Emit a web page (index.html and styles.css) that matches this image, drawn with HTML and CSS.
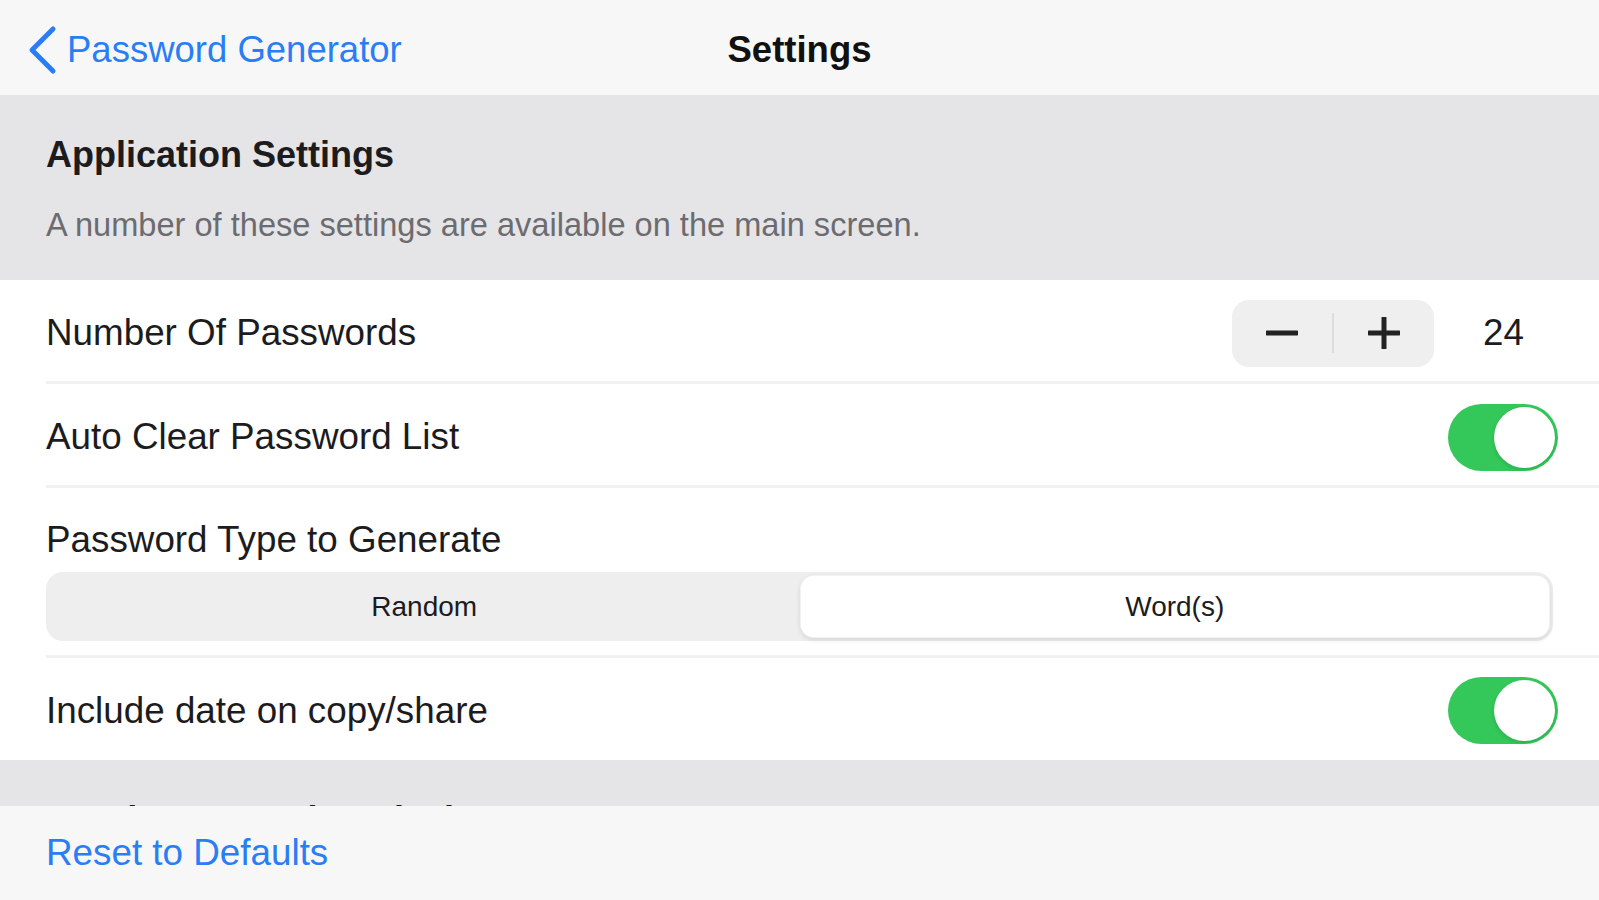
FILE: index.html
```html
<!DOCTYPE html>
<html lang="en">

<head>
    <meta charset="UTF-8">
    <meta name="viewport" content="width=device-width, initial-scale=1.0">
    <title>Settings</title>
    <link rel="stylesheet" href="styles.css">
</head>

<body>
    <div class="navbar">
        <a href="#" class="back">
            <svg class="chevron" width="30" height="50" viewBox="0 0 30 50">
                <path d="M25 4 L4 25 L25 46" fill="none" stroke="currentColor" stroke-width="5"
                    stroke-linecap="round" stroke-linejoin="round" />
            </svg>
            <span>Password Generator</span>
        </a>
        <h1 class="title">Settings</h1>
        <div></div>
    </div>

    <div class="content">
        <div class="group-header">
            <h2>Application Settings</h2>
            <p>A number of these settings are available on the main screen.</p>
        </div>

        <div class="group">
            <div class="row">
                <span class="label">Number Of Passwords</span>
                <div class="right">
                    <div class="stepper">
                        <button class="step">
                            <svg width="32" height="32" viewBox="0 0 32 32">
                                <path d="M1 16 H31" stroke="#222" stroke-width="5" stroke-linecap="round" />
                            </svg>
                        </button>
                        <span class="step-divider"></span>
                        <button class="step">
                            <svg width="32" height="32" viewBox="0 0 32 32">
                                <path d="M1 16 H31 M16 1 V31" stroke="#222" stroke-width="5"
                                    stroke-linecap="round" />
                            </svg>
                        </button>
                    </div>
                    <span class="value">24</span>
                </div>
            </div>

            <div class="row">
                <span class="label">Auto Clear Password List</span>
                <div class="toggle"><span class="knob"></span></div>
            </div>

            <div class="row row-stack">
                <span class="label">Password Type to Generate</span>
                <div class="segmented">
                    <div class="segment">Random</div>
                    <div class="segment selected">Word(s)</div>
                </div>
            </div>

            <div class="row last">
                <span class="label">Include date on copy/share</span>
                <div class="toggle"><span class="knob"></span></div>
            </div>
        </div>

        <div class="group-header">
            <h2>Word Password Analysis</h2>
        </div>
    </div>

    <div class="toolbar">
        <a href="#">Reset to Defaults</a>
    </div>
</body>

</html>
```

FILE: styles.css
```css
* {
    margin: 0;
    padding: 0;
    box-sizing: border-box;
}

html,
body {
    height: 100%;
    width: 100%;
}

body {
    font-family: "Liberation Sans", Arial, sans-serif;
    color: #1c1c1e;
    background: #e5e5e7;
    overflow: hidden;
    display: flex;
    flex-direction: column;
}

a {
    color: #2a7ef5;
    text-decoration: none;
}

.navbar {
    flex: none;
    height: 95px;
    padding-top: 5px;
    background: #f7f7f7;
    display: grid;
    grid-template-columns: 1fr auto 1fr;
    align-items: center;
}

.back {
    display: flex;
    align-items: center;
    gap: 9px;
    padding-left: 28px;
    font-size: 36.5px;
}

.chevron {
    display: block;
}

.title {
    font-size: 36.5px;
    font-weight: bold;
    color: #111;
}

.content {
    flex: 1;
    min-height: 0;
    overflow: hidden;
}

.group-header {
    height: 185px;
    padding: 38px 0 0 46px;
    background: #e5e5e7;
}

.group-header h2 {
    font-size: 36px;
    font-weight: bold;
    line-height: 44px;
    color: #1c1c1e;
}

.group-header p {
    margin-top: 28px;
    font-size: 32.6px;
    line-height: 40px;
    color: #6c6c70;
}

.group {
    background: #fff;
}

.row {
    margin-left: 46px;
    padding-right: 41px;
    padding-top: 5px;
    height: 104px;
    display: flex;
    align-items: center;
    justify-content: space-between;
    border-bottom: 3px solid #f1f1f2;
}

.row.last {
    height: 102px;
    padding-top: 3px;
    border-bottom: none;
}

.label {
    font-size: 36.8px;
    line-height: 44px;
}

.right {
    display: flex;
    align-items: center;
}

.stepper {
    width: 202px;
    height: 67px;
    border-radius: 17px;
    background: #efeff0;
    display: flex;
    align-items: center;
}

.step {
    flex: 1;
    height: 100%;
    border: none;
    background: none;
    display: flex;
    align-items: center;
    justify-content: center;
}

.step-divider {
    width: 2px;
    height: 40px;
    background: #dcdcde;
}

.value {
    margin-left: 49px;
    margin-right: 34px;
    font-size: 36.8px;
}

.toggle {
    width: 110px;
    height: 67px;
    border-radius: 34px;
    background: #34c759;
    padding: 3px;
    display: flex;
    justify-content: flex-end;
}

.knob {
    width: 61px;
    height: 61px;
    border-radius: 50%;
    background: #fff;
    box-shadow: 0 2px 4px rgba(0, 0, 0, 0.12);
}

.row-stack {
    height: 170px;
    padding: 30px 46px 14px 0;
    flex-direction: column;
    align-items: stretch;
    justify-content: flex-start;
}

.segmented {
    margin-top: 10px;
    height: 69px;
    border-radius: 17px;
    background: #eeeeef;
    padding: 3px;
    display: grid;
    grid-template-columns: 1fr 1fr;
}

.segment {
    display: flex;
    align-items: center;
    justify-content: center;
    font-size: 28px;
    color: #1c1c1e;
}

.segment.selected {
    background: #fff;
    border-radius: 14px;
    border: 1px solid rgba(0, 0, 0, 0.05);
    box-shadow: 0 2px 5px rgba(0, 0, 0, 0.1);
}

.toolbar {
    flex: none;
    height: 94px;
    background: #f7f7f7;
    padding-left: 46px;
    display: flex;
    align-items: center;
    font-size: 36.8px;
}
```
